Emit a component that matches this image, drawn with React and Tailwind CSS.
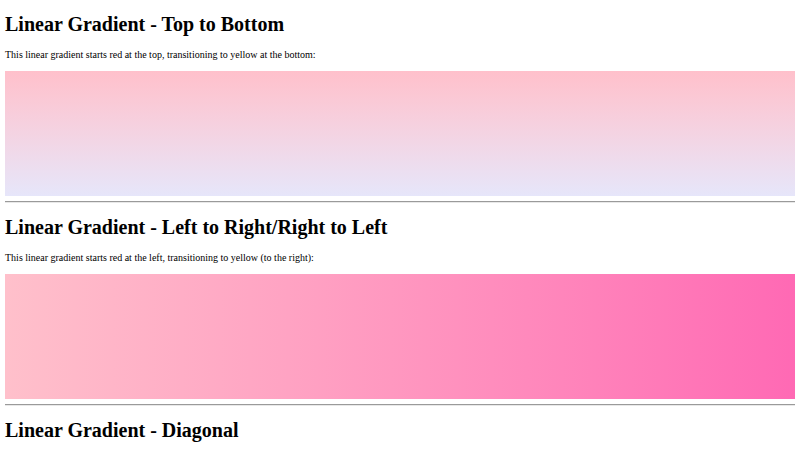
export default function App() {
  return (
    <div className="min-h-[450px] bg-white px-[5px] text-black" style={{ fontFamily: '"Liberation Serif", "Times New Roman", serif' }}>
      <h1 className="pt-[12px] text-[20px] font-bold leading-[24px]">Linear Gradient - Top to Bottom</h1>
      <p className="mt-[13px] text-[10px] leading-[12px]">
        This linear gradient starts red at the top, transitioning to yellow at the bottom:
      </p>
      <div className="mt-[10px] h-[125px] bg-gradient-to-b from-[#ffc0cb] to-[#e6e6fa]" />
      <hr className="mt-[5px] border-t border-b border-t-[#9a9a9a] border-b-[#e8e8e8]" />

      <h2 className="mt-[12px] text-[20px] font-bold leading-[24px]">Linear Gradient - Left to Right/Right to Left</h2>
      <p className="mt-[13px] text-[10px] leading-[12px]">
        This linear gradient starts red at the left, transitioning to yellow (to the right):
      </p>
      <div className="mt-[10px] h-[125px] bg-gradient-to-r from-[#ffc0cb] to-[#ff69b4]" />
      <hr className="mt-[5px] border-t border-b border-t-[#9a9a9a] border-b-[#e8e8e8]" />

      <h2 className="mt-[12px] text-[20px] font-bold leading-[24px]">Linear Gradient - Diagonal</h2>
    </div>
  );
}
